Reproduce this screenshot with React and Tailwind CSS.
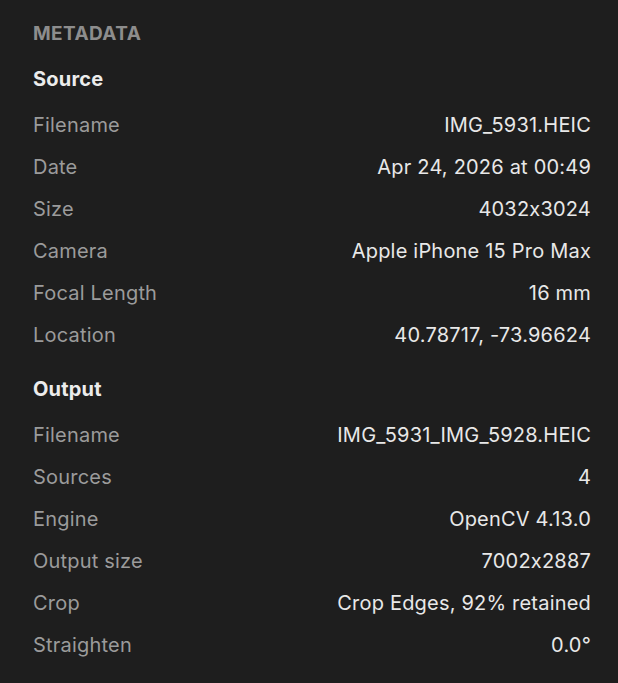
export default function App() {
  const source = [
    ["Filename", "IMG_5931.HEIC"],
    ["Date", "Apr 24, 2026 at 00:49"],
    ["Size", "4032x3024"],
    ["Camera", "Apple iPhone 15 Pro Max"],
    ["Focal Length", "16 mm"],
    ["Location", "40.78717, -73.96624"],
  ];
  const output = [
    ["Filename", "IMG_5931_IMG_5928.HEIC"],
    ["Sources", "4"],
    ["Engine", "OpenCV 4.13.0"],
    ["Output size", "7002x2887"],
    ["Crop", "Crop Edges, 92% retained"],
    ["Straighten", "0.0°"],
  ];
  const Row = ({ k, v }) => (
    <div className="flex h-[42px] items-center justify-between">
      <span className="text-[#9b9b9b]">{k}</span>
      <span className="text-[#e8e8e8]">{v}</span>
    </div>
  );
  return (
    <div
      className="min-h-[683px] w-[618px] bg-[#1e1e1e] pl-[33px] pr-[27px] pt-[22px] text-[20px] tracking-[0.2px] [font-feature-settings:'calt'_0]"
      style={{ fontFamily: "Inter, 'Noto Sans', sans-serif" }}
    >
      <div className="h-[24px] leading-[24px] font-bold text-[#8d8d8d] text-[19px] tracking-[0.4px]">METADATA</div>
      <div className="mt-[21px] h-[24px] leading-[24px] font-bold text-[#ececec]">Source</div>
      <div className="mt-[13px]">
        {source.map(([k, v]) => (
          <Row key={k} k={k} v={v} />
        ))}
      </div>
      <div className="mt-[21px] h-[24px] leading-[24px] font-bold text-[#ececec]">Output</div>
      <div className="mt-[13px]">
        {output.map(([k, v]) => (
          <Row key={k} k={k} v={v} />
        ))}
      </div>
    </div>
  );
}
